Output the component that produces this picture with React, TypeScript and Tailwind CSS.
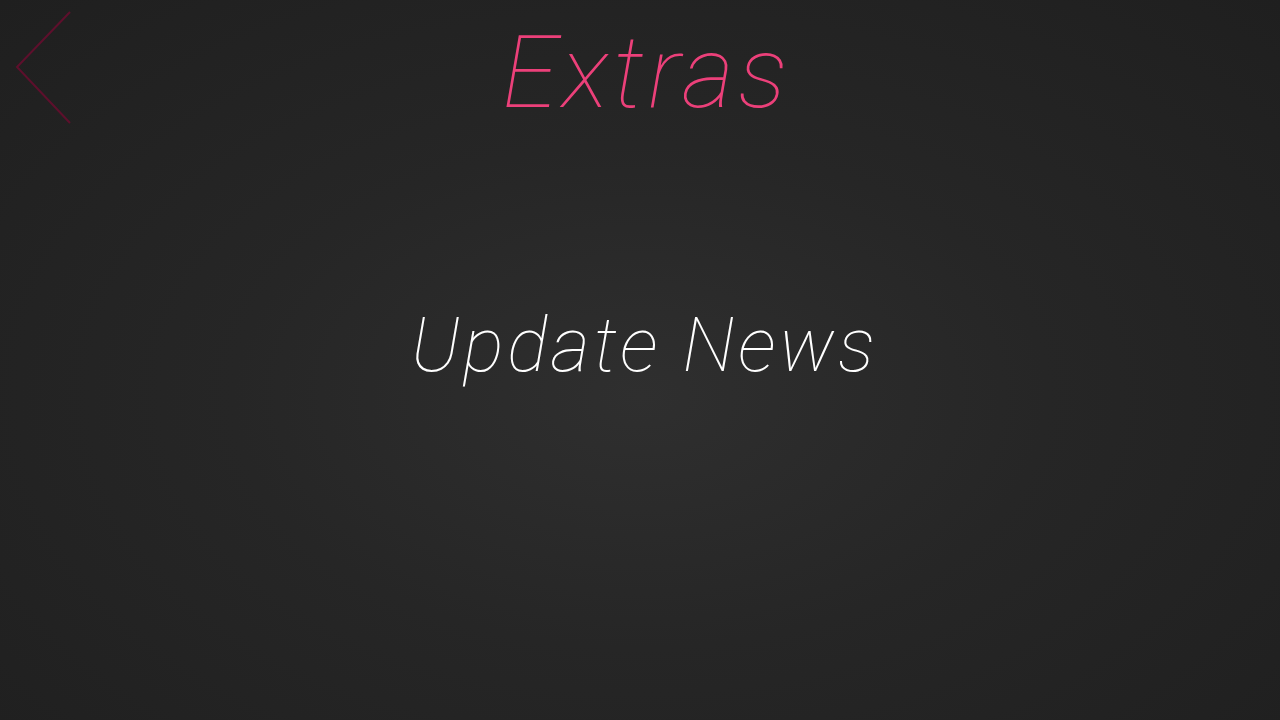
export default function App() {
  return (
    <div className="relative w-full h-[720px] overflow-hidden bg-[radial-gradient(ellipse_at_50%_55%,#2f2f2f_0%,#262626_45%,#1f1f1f_100%)] font-['Roboto','Liberation_Sans',sans-serif] italic font-thin">
      {/* back chevron */}
      <button className="absolute left-[12px] top-[8px] w-[64px] h-[120px]">
        <svg width="64" height="120" viewBox="0 0 64 120">
          <polyline
            points="58,4 5,59 58,115"
            fill="none"
            stroke="#5e0f2c"
            strokeWidth="2"
          />
        </svg>
      </button>
      <div className="flex flex-col items-center">
        <h1 className="mt-[13px] text-[101px] leading-[120px] text-[#ec407a] tracking-[4px] pl-[13px]">Extras</h1>
        <div className="mt-[162px] text-[76px] leading-[100px] text-white tracking-[3.5px] pl-[9px]">Update News</div>
      </div>
    </div>
  );
}
